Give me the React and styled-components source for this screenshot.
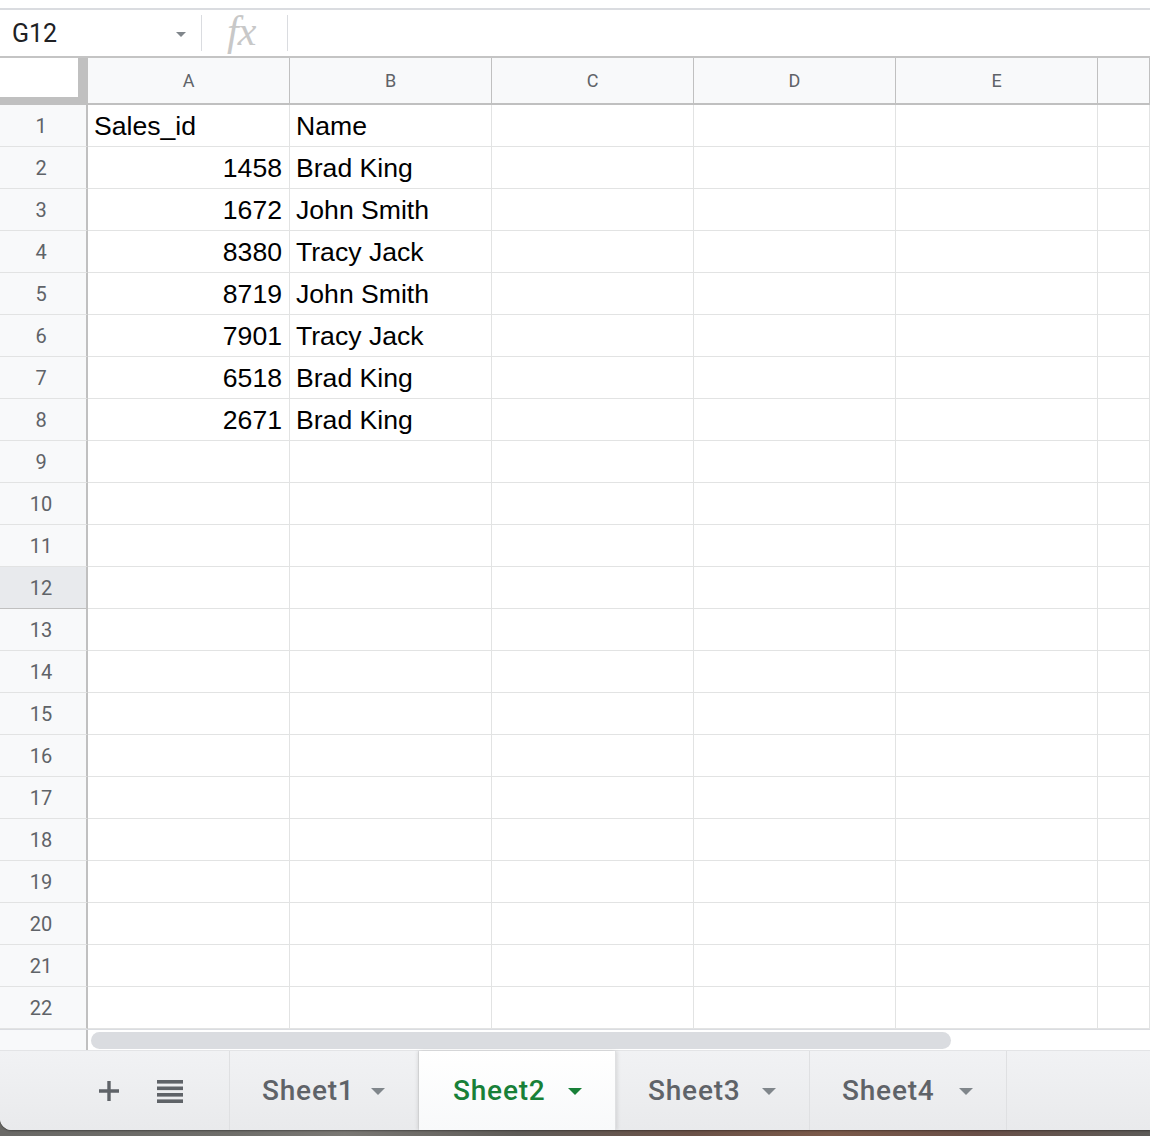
import React from 'react'
import styled, { createGlobalStyle } from 'styled-components'

const GlobalStyle = createGlobalStyle`
  html, body {
    margin: 0;
    padding: 0;
  }
  body {
    width: 1150px;
    height: 1136px;
    overflow: hidden;
    background: linear-gradient(
      90deg,
      #6a6966 0%,
      #6f6e6a 20%,
      #7a7874 30%,
      #5f5c58 45%,
      #6b5248 60%,
      #7b5a4a 72%,
      #6a5048 85%,
      #5d5b58 100%
    );
    font-family: Roboto, "Liberation Sans", sans-serif;
  }
  * {
    box-sizing: border-box;
  }
`

const COLS = ['A', 'B', 'C', 'D', 'E', '']
const ROW_COUNT = 22
const SELECTED_ROW = 12

const DATA = [
  ['Sales_id', 'Name'],
  [1458, 'Brad King'],
  [1672, 'John Smith'],
  [8380, 'Tracy Jack'],
  [8719, 'John Smith'],
  [7901, 'Tracy Jack'],
  [6518, 'Brad King'],
  [2671, 'Brad King'],
]

const SHEETS = [
  { name: 'Sheet1', width: 189 },
  { name: 'Sheet2', width: 197 },
  { name: 'Sheet3', width: 194 },
  { name: 'Sheet4', width: 197 },
]
const ACTIVE_SHEET = 'Sheet2'

const Window = styled.div`
  width: 1150px;
  height: 1130px;
  background: #fff;
  border-bottom-left-radius: 12px;
  overflow: hidden;
  display: flex;
  flex-direction: column;
  box-shadow: 0 1px 2px rgba(0, 0, 0, 0.35);
`

const TopStrip = styled.div`
  height: 10px;
  flex: none;
  border-bottom: 2px solid #dadce0;
`

const FormulaBar = styled.div`
  height: 48px;
  flex: none;
  display: flex;
  align-items: center;
  border-bottom: 2px solid #c4c4c4;
`

const NameBox = styled.div`
  width: 201px;
  height: 100%;
  display: flex;
  align-items: center;
  justify-content: space-between;
  padding: 0 15px 0 12px;
`

const NameText = styled.span`
  font-family: Roboto, sans-serif;
  font-size: 25px;
  color: #202124;
`

const Caret = styled.span`
  width: 0;
  height: 0;
  margin-top: 3px;
  border-left: 5px solid transparent;
  border-right: 5px solid transparent;
  border-top: 5px solid #80868b;
`

const Divider = styled.div`
  width: 1px;
  height: 36px;
  background: #dadce0;
`

const FxBox = styled.div`
  width: 85px;
  display: flex;
  align-items: center;
  padding-left: 25px;
`

const FxLabel = styled.span`
  font-family: "Liberation Serif", serif;
  font-style: italic;
  font-size: 42px;
  line-height: 1;
  margin-top: -4px;
  color: #c8c8c8;
  letter-spacing: -1px;
`

const Sheet = styled.div`
  flex: none;
  display: grid;
  grid-template-columns: 88px repeat(5, 202px) 1fr;
  grid-template-rows: 47px repeat(${ROW_COUNT}, 42px);
`

const Corner = styled.div`
  background: #fff;
  border-right: 10px solid #c0c0c0;
  border-bottom: 8px solid #c0c0c0;
`

const ColHeader = styled.div`
  background: #f8f9fa;
  border-right: 1px solid #c0c0c0;
  border-bottom: 2px solid #c0c0c0;
  display: flex;
  align-items: center;
  justify-content: center;
  font-family: Roboto, sans-serif;
  font-size: 18px;
  color: #5f6368;
`

const RowHeader = styled.div`
  background: ${p => (p.$selected ? '#e8eaed' : '#f8f9fa')};
  border-right: 2px solid #c0c0c0;
  border-bottom: 1px solid ${p => (p.$selected ? '#c0c0c0' : '#e2e3e3')};
  display: flex;
  align-items: center;
  justify-content: center;
  padding-right: 4px;
  font-family: Roboto, sans-serif;
  font-size: 20px;
  color: #5f6368;
`

const Cell = styled.div`
  border-right: 1px solid #e2e3e3;
  border-bottom: 1px solid #e2e3e3;
  display: flex;
  align-items: center;
  justify-content: ${p => (p.$number ? 'flex-end' : 'flex-start')};
  padding: 2px 7px 0 6px;
  font-family: "Liberation Sans", Arial, sans-serif;
  font-size: 26.6px;
  color: #000;
  white-space: nowrap;
  overflow: hidden;
`

const ScrollRow = styled.div`
  flex: none;
  height: 21px;
  display: flex;
  border-top: 1px solid #dadce0;
`

const ScrollGutter = styled.div`
  width: 88px;
  background: #f8f9fa;
  border-right: 2px solid #c0c0c0;
`

const ScrollTrack = styled.div`
  flex: 1;
  display: flex;
  align-items: center;
  padding-left: 3px;
`

const Thumb = styled.div`
  width: 860px;
  height: 17px;
  border-radius: 9px;
  background: #dadce0;
`

const TabBar = styled.div`
  flex: 1;
  display: flex;
  align-items: stretch;
  border-top: 1px solid #e3e4e6;
  background: linear-gradient(180deg, #f1f2f4 0%, #e9eaec 100%);
`

const TabTools = styled.div`
  width: 230px;
  display: flex;
  align-items: center;
  justify-content: flex-end;
  gap: 36px;
  padding-right: 46px;
  border-right: 1px solid #dfe0e2;
`

const ToolButton = styled.span`
  display: flex;
  align-items: center;
  color: #5f6368;
`

const Tab = styled.div`
  width: ${p => p.$width}px;
  flex: none;
  display: flex;
  align-items: center;
  justify-content: space-between;
  padding: 0 33px 0 ${p => (p.$active ? 34 : 32)}px;
  border-right: 1px solid #dfe0e2;
  background: ${p =>
    p.$active ? 'linear-gradient(180deg, #ffffff 0%, #f8f9fa 100%)' : 'transparent'};
  box-shadow: ${p =>
    p.$active ? '-2px 0 3px rgba(0,0,0,0.08), 2px 0 3px rgba(0,0,0,0.08)' : 'none'};
  position: relative;
`

const TabLabel = styled.span`
  font-family: Roboto, sans-serif;
  font-weight: 500;
  font-size: 28px;
  letter-spacing: 0.8px;
  color: ${p => (p.$active ? '#188038' : '#5f6368')};
`

const TabArrow = styled.span`
  width: 0;
  height: 0;
  margin-top: 2px;
  border-left: 7.5px solid transparent;
  border-right: 7.5px solid transparent;
  border-top: 7.5px solid ${p => (p.$active ? '#188038' : '#80868b')};
`

const PlusIcon = () => (
  <svg width="24" height="24" viewBox="0 0 24 24">
    <path d="M12 2v20M2 12h20" stroke="currentColor" strokeWidth="3.4" fill="none" />
  </svg>
)

const ListIcon = () => (
  <svg width="26" height="24" viewBox="0 0 26 24">
    <rect x="0" y="1" width="26" height="3.6" fill="currentColor" />
    <rect x="0" y="7.5" width="26" height="3.6" fill="currentColor" />
    <rect x="0" y="14" width="26" height="3.6" fill="currentColor" />
    <rect x="0" y="20.4" width="26" height="3.6" fill="currentColor" />
  </svg>
)

function renderRow(rowIndex) {
  const n = rowIndex + 1
  const values = DATA[rowIndex] || []
  return (
    <React.Fragment key={n}>
      <RowHeader $selected={n === SELECTED_ROW}>{n}</RowHeader>
      {COLS.map((c, ci) => {
        const v = values[ci]
        return (
          <Cell key={ci} $number={typeof v === 'number'}>
            {v}
          </Cell>
        )
      })}
    </React.Fragment>
  )
}

export default function App() {
  return (
    <>
      <GlobalStyle />
      <Window>
        <TopStrip />
        <FormulaBar>
          <NameBox>
            <NameText>G12</NameText>
            <Caret />
          </NameBox>
          <Divider />
          <FxBox>
            <FxLabel>fx</FxLabel>
          </FxBox>
          <Divider />
        </FormulaBar>

        <Sheet>
          <Corner />
          {COLS.map((c, i) => (
            <ColHeader key={i}>{c}</ColHeader>
          ))}
          {Array.from({ length: ROW_COUNT }, (_, i) => renderRow(i))}
        </Sheet>

        <ScrollRow>
          <ScrollGutter />
          <ScrollTrack>
            <Thumb />
          </ScrollTrack>
        </ScrollRow>

        <TabBar>
          <TabTools>
            <ToolButton>
              <PlusIcon />
            </ToolButton>
            <ToolButton>
              <ListIcon />
            </ToolButton>
          </TabTools>
          {SHEETS.map(s => {
            const active = s.name === ACTIVE_SHEET
            return (
              <Tab key={s.name} $width={s.width} $active={active}>
                <TabLabel $active={active}>{s.name}</TabLabel>
                <TabArrow $active={active} />
              </Tab>
            )
          })}
        </TabBar>
      </Window>
    </>
  )
}
